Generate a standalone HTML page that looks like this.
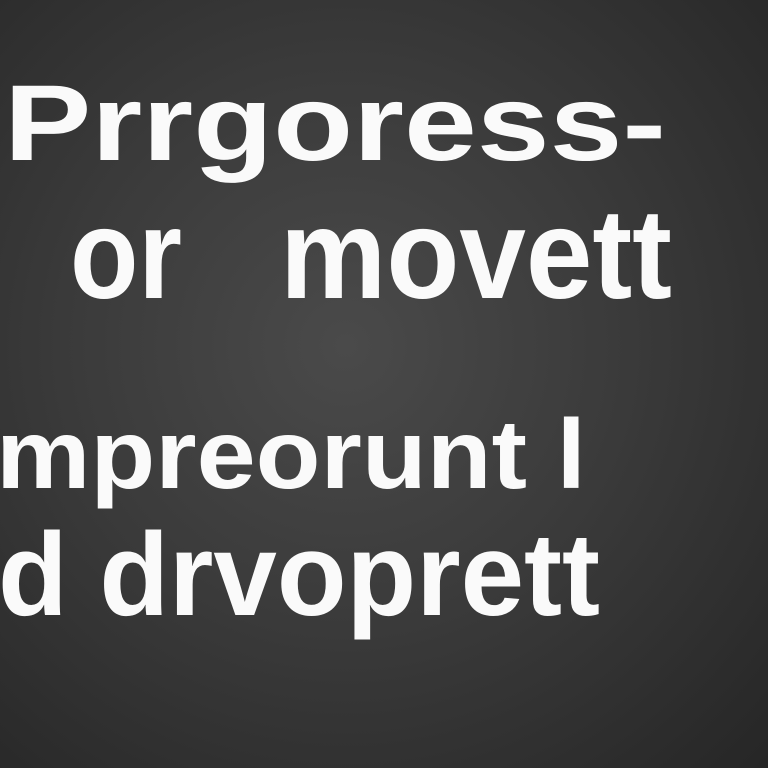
<!DOCTYPE html>
<html><head><meta charset="utf-8"><style>
html,body{margin:0;padding:0;width:768px;height:768px;overflow:hidden;}
body{background:radial-gradient(ellipse at 45% 45%,#4a4a4a 0%,#3b3b3b 45%,#262626 100%);}
svg{display:block}
text{font-family:"Liberation Sans",sans-serif;font-weight:bold;fill:#fafafa;}
</style></head><body>
<svg width="768" height="768" viewBox="0 0 768 768">
<text x="4" y="160" font-size="108" textLength="662" lengthAdjust="spacingAndGlyphs">Prrgoress-</text>
<text x="70" y="298" font-size="128" textLength="112" lengthAdjust="spacingAndGlyphs">or</text>
<text x="280" y="298" font-size="128" textLength="392" lengthAdjust="spacingAndGlyphs">movett</text>
<text x="-4" y="488" font-size="98" textLength="590" lengthAdjust="spacingAndGlyphs">mpreorunt l</text>
<text x="-2" y="615" font-size="118" textLength="602" lengthAdjust="spacingAndGlyphs">d drvoprett</text>
</svg>
</body></html>
